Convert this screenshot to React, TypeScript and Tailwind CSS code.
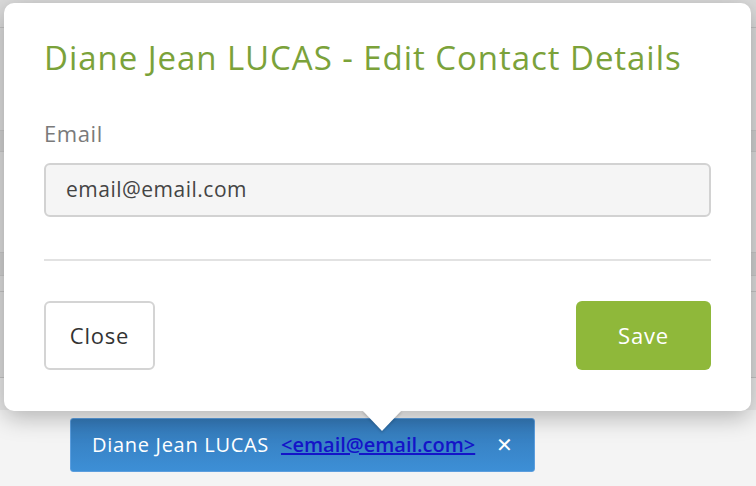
export default function App() {
  return (
    <div
      className="relative h-[486px] w-[756px] overflow-hidden bg-[#f4f4f4]"
      style={{ fontFamily: "'Open Sans', Lato, sans-serif" }}
    >
      {/* page behind the popover */}
      <div className="flex flex-col bg-[#dcdcdc]">
        <div className="h-[28px] border-b border-[#c4c4c4]" />
        <div className="h-[102px]" />
        <div className="h-[22px] border-y border-[#c8c8c8] bg-[#d0d0d0]" />
        <div className="h-[100px]" />
        <div className="h-[24px] border-y border-[#c8c8c8] bg-[#d0d0d0]" />
        <div className="h-[16px] border-b border-[#c4c4c4]" />
        <div className="h-[86px] border-b border-[#c4c4c4]" />
        <div className="h-[32px] bg-[#e8e8e8]" />
      </div>

      {/* contact tag */}
      <div className="absolute left-[70px] top-[418px] flex h-[54px] w-[465px] items-center rounded-[3px] border border-[#5c9ede] bg-gradient-to-b from-[#3479b8] to-[#3d8fd6] pl-[21px] pr-[20px] text-[20px] tracking-[0.7px] text-white">
        <span>Diane Jean LUCAS</span>
        <span className="ml-[12px] font-semibold tracking-normal text-[#1414c8] underline">
          &lt;email@email.com&gt;
        </span>
        <span className="ml-auto text-[20px] leading-none">✕</span>
      </div>

      {/* popover */}
      <div className="absolute left-[4px] top-[3px] h-[408px] w-[747px] rounded-[10px] bg-white px-[40px] pt-[33px] shadow-[0_6px_24px_rgba(0,0,0,0.28)]">
        <h1 className="text-[33px] leading-[44px] tracking-[0.95px] text-[#7ba23a]">
          Diane Jean LUCAS - Edit Contact Details
        </h1>
        <label className="mt-[40px] block text-[22px] leading-[26px] tracking-[0.6px] text-[#7a7a7a]">
          Email
        </label>
        <div className="mt-[17px] flex h-[54px] items-center rounded-[6px] border-2 border-[#d2d2d2] bg-[#f5f5f5] px-[20px] text-[21px] tracking-[0.5px] text-[#444]">
          email@email.com
        </div>
        <div className="mt-[42px] h-[2px] bg-[#e2e2e2]" />
        <div className="mt-[40px] flex justify-between">
          <button className="h-[69px] w-[111px] rounded-[6px] border-2 border-[#d4d4d4] bg-white text-[22px] tracking-[0.8px] text-[#333]">
            Close
          </button>
          <button className="h-[69px] w-[135px] rounded-[6px] bg-[#8fb83a] text-[22px] tracking-[0.8px] text-white">
            Save
          </button>
        </div>
        {/* arrow */}
        <div className="absolute left-[358px] top-[407px] h-0 w-0 border-x-[20px] border-t-[21px] border-x-transparent border-t-white drop-shadow-[0_2px_1px_rgba(0,0,0,0.15)]" />
      </div>
    </div>
  );
}
